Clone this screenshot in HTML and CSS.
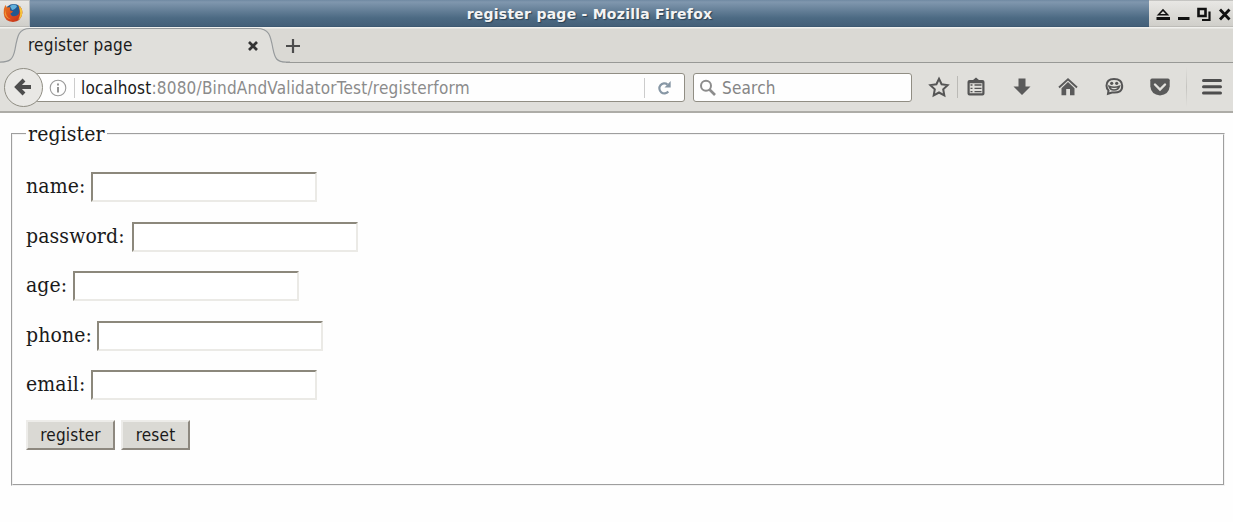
FILE: index.html
```
<!DOCTYPE html>
<html lang="en">
<head>
<meta charset="utf-8">
<title>register page</title>
<link rel="stylesheet" href="styles.css">
</head>
<body>
<header class="titlebar">
  <div class="app-icon">
    <svg width="20" height="20" viewBox="0 0 20 20">
      <defs>
        <linearGradient id="fox" x1="0" y1="0" x2="1" y2="1"><stop offset="0" stop-color="#e87a22"/><stop offset=".55" stop-color="#d9481c"/><stop offset="1" stop-color="#b92d18"/></linearGradient>
      </defs>
      <circle cx="10.7" cy="9.3" r="8.4" fill="#22588f"/>
      <path d="M7 3Q11 0 14 3Q13 6 9 7z" fill="#5fb0dc"/>
      <path d="M15 1.8Q20 5.5 19.3 10.5Q18 18.6 10 19Q1.4 18.6.7 10.5Q.5 5 2.3 2L4 4.6Q6 3.7 7.6 4.6Q6.4 6.3 7.2 7.4L10 8.3Q9.5 9.8 7.4 10.4Q8 13.3 11 13.2Q16.7 13 16.5 7Q16.3 4 15 1.8z" fill="url(#fox)"/>
      <path d="M15 1.8Q20 5.5 19.3 10.5Q18.6 15 15 17Q18 12 16.8 7Q16.4 4 15 1.8z" fill="#f6c33b"/>
      <path d="M2.5 7Q2.3 14 8 16.3Q3.3 15.8 1.6 11z" fill="#f19a37"/>
    </svg>
  </div>
  <div class="window-title">register page - Mozilla Firefox</div>
  <div class="window-controls">
    <svg width="84" height="27" viewBox="0 0 84 27" fill="none" stroke="#111" stroke-width="2">
      <path d="M9.500 14.800L14 10L18.500 14.800z" stroke-width="1.600"/><path d="M7.500 18.500h13.500" stroke-width="3"/><path d="M29 18.500h11.500" stroke-width="3"/>
      <path d="M49.500 9h7v7h-7z" stroke-width="2.600"/><path d="M60.500 11.500v8.500H53" stroke-width="2.200"/>
      <path d="M71 9.500l9.500 10M80.500 9.500l-9.500 10" stroke-width="2.800"/>
    </svg>
  </div>
</header>
<div class="tabstrip">
  <div class="tab">
    <svg class="tab-shape" width="290" height="36" viewBox="0 0 290 36">
      <path d="M0 35.500C10 35.500 13 33 15 23C17.500 8 19 1.500 30 1.500H257C269 1.500 270.500 8 273 22C275 32 277 35.500 286 35.500V36H0z" fill="#e0dfdb"/>
      <path d="M0 35C10 35 13 32.500 15 22.500C17.500 8 19 1.500 30 1.500H257C269 1.500 270.500 8 273 22C275 32 277 35 286 35H290" fill="none" stroke="#969a9c" stroke-width="1.200"/>
    </svg>
    <span class="tab-label">register page</span>
    <svg class="tab-close" width="10" height="10" viewBox="0 0 10 10"><path d="M1 1l8 8M9 1l-8 8" stroke="#333" stroke-width="2.700"/></svg>
  </div>
  <svg class="new-tab" width="16" height="16" viewBox="0 0 16 16"><path d="M8 1v14M1 8h14" stroke="#4c4c4c" stroke-width="2.200"/></svg>
</div>
<nav class="toolbar">
  <div class="back">
    <svg width="18" height="18" viewBox="0 0 18 18"><path d="M10 2L3 9l7 7M3 9h14" fill="none" stroke="#4d4d4d" stroke-width="4"/></svg>
  </div>
  <div class="urlbar">
    <svg class="info" width="18" height="18" viewBox="0 0 18 18"><circle cx="9" cy="9" r="7.800" fill="none" stroke="#999" stroke-width="1.100"/><path d="M9 4.500v2M9 8v5.500" stroke="#888" stroke-width="1.800"/></svg>
    <span class="sep"></span>
    <span class="url"><b>localhost</b>:8080/BindAndValidatorTest/registerform</span>
    <span class="sep"></span>
    <svg class="reload" width="14" height="15" viewBox="0 0 14 15"><path d="M11.300 11.500A5 5 0 1 1 10.500 4.500" fill="none" stroke="#8797a5" stroke-width="2.200"/><path d="M13.700 1v6.500H7.500z" fill="#8797a5"/></svg>
  </div>
  <div class="search">
    <svg width="18" height="18" viewBox="0 0 18 18" fill="none" stroke="#8c8c8c"><circle cx="7" cy="6.700" r="5" stroke-width="2"/><path d="M10.500 10.500l5.500 5.500" stroke-width="2.600"/></svg>
    <span>Search</span>
  </div>
  <div class="tools">
    <svg width="22" height="22" viewBox="0 0 22 22"><path d="M11 2.800l2.600 5.500 6 .8-4.400 4.200 1.100 6.100-5.300-2.900-5.300 2.900 1.100-6.100-4.400-4.200 6-.8z" fill="none" stroke="#555" stroke-width="2"/></svg>
    <span class="tool-sep"></span>
    <svg width="22" height="22" viewBox="0 0 22 22"><path fill="#555" fill-rule="evenodd" d="M4.500 4H8l3-2.500L14 4h3.500q2 0 2 2v11.500q0 2-2 2h-13q-2 0-2-2V6q0-2 2-2zM4.700 7.300v10h12.600v-10z"/><path d="M5.500 9h2M9.500 9h7M5.500 12.300h2M9.500 12.300h7M5.500 15.600h2M9.500 15.600h7" stroke="#555" stroke-width="1.300"/></svg>
    <svg width="22" height="22" viewBox="0 0 22 22"><path d="M7.500 2.500h7v8h5L11 19l-8.500-8.500h5z" fill="#5a5a5a"/></svg>
    <svg width="22" height="22" viewBox="0 0 22 22"><path d="M2 11.500L11 3.200l9 8.300" fill="none" stroke="#5a5a5a" stroke-width="1.900"/><path d="M4.500 12.200L11 6l6.500 6.200v7H13V13H9.200v6.200H4.500z" fill="#5a5a5a"/></svg>
    <svg width="22" height="22" viewBox="0 0 22 22"><path d="M11 3C6 3 3.500 5.800 3.500 9.800q0 2.700 2 4.700L5 17.800 9 16.500q10.500 1 10.200-6.700Q19 3 11 3z" fill="none" stroke="#555" stroke-width="2"/><path d="M6 10.200Q11 12.200 16.500 10.200Q15.500 13.800 11 14Q7 13.800 6 10.200z" fill="none" stroke="#555" stroke-width="1.500"/><circle cx="8.700" cy="7.300" r="1.600" fill="#555"/><circle cx="13.700" cy="7.300" r="1.600" fill="#555"/></svg>
    <svg width="22" height="22" viewBox="0 0 22 22"><path d="M3 2.500h16q1.700 0 1.700 1.700v6Q20 18.500 11 19.500Q2 18.500 1.300 10.200v-6Q1.300 2.500 3 2.500z" fill="#5a5a5a"/><path d="M6 8.500l5 5 5-5" fill="none" stroke="#e2e1dd" stroke-width="2.400" stroke-linecap="round"/></svg>
    <span class="menu-sep"></span>
    <svg width="22" height="22" viewBox="0 0 22 22"><path d="M2.500 4.500h17M2.500 10.700h17M2.500 16.900h17" stroke="#4d4d4d" stroke-width="3" stroke-linecap="round"/></svg>
  </div>
</nav>
<main class="page">
  <form>
    <fieldset>
      <legend>register</legend>
      <div class="row"><label class="l-name" for="name">name:</label><input id="name" type="text"></div>
      <div class="row"><label class="l-password" for="password">password:</label><input id="password" type="password"></div>
      <div class="row"><label class="l-age" for="age">age:</label><input id="age" type="text"></div>
      <div class="row"><label class="l-phone" for="phone">phone:</label><input id="phone" type="text"></div>
      <div class="row"><label class="l-email" for="email">email:</label><input id="email" type="text"></div>
      <div class="row"><button class="b-register" type="button">register</button><button class="b-reset" type="reset">reset</button></div>
    </fieldset>
  </form>
</main>
</body>
</html>
```
FILE: styles.css
```
* { box-sizing: border-box; }
body {
  margin: 0;
  height: 522px;
  overflow: hidden;
  background: #fefefe;
  color: #1a1a1a;
  font-family: "DejaVu Sans Condensed", "DejaVu Sans", sans-serif;
  font-stretch: condensed;
  font-size: 17px;
  letter-spacing: .2px;
}
svg { display: block; flex: none; }

.titlebar {
  display: flex;
  height: 27px;
  background: linear-gradient(#6f89a2 0, #8097ae 2px, #4c6a83 18px, #446079 26px, #38536b 27px);
}
.app-icon, .window-controls {
  background: linear-gradient(#a3a3a1 0, #e8e7e4 1px, #d0cfca 26px, #aaa9a5 27px);
}
.app-icon { width: 30px; padding: 3px 0 0 3px; border-right: 1px solid #b5bbc0; }
.window-title {
  flex: 1;
  padding-top: 1px;
  text-align: center;
  font: bold 14px/27px "DejaVu Sans", sans-serif;
  letter-spacing: .25px;
  color: #f4f4f4;
  text-shadow: 1px 1px 1px #2b4052;
}
.window-controls { width: 84px; }

.tabstrip {
  display: flex;
  height: 36px;
  background: linear-gradient(#f1f1ee 0, #f1f1ee 1px, #dad9d4 2px, #dad9d4 35px, #989996 35px);
}
.tab { position: relative; width: 285px; display: flex; height: 36px; }
.tab-shape { position: absolute; left: 0; top: 0; }
.tab-label { position: relative; margin-left: 28px; width: 220px; line-height: 36px; }
.tab-close { position: relative; margin-top: 14px; }
.new-tab { margin-top: 11px; }

.toolbar {
  display: flex;
  height: 50px;
  background: #e0dfdb;
  border-bottom: 2px solid #adaca7;
}
.back {
  position: relative;
  z-index: 1;
  width: 39px;
  height: 39px;
  margin: 5px 0 0 4px;
  padding: 9px 0 0 9px;
  border: 1px solid #8f8d83;
  border-radius: 50%;
  background: #e9e8e5;
}
.urlbar, .search {
  display: flex;
  align-items: center;
  height: 29px;
  margin-top: 10px;
  border: 1px solid #918e84;
  border-radius: 3px;
  background: #fefefe;
}
.urlbar { width: 650px; margin-left: -8px; padding-left: 13px; }
.sep { width: 1px; height: 20px; background: #ccc; }
.info + .sep { margin: 0 6px 0 7px; }
.url { width: 563px; color: #8b8b8b; }
.url b { color: #1a1a1a; font-weight: normal; }
.reload { margin-left: 12px; }
.search { width: 219px; margin-left: 8px; padding-left: 5px; color: #858585; }
.search span { margin-left: 5px; }
.tools { display: flex; margin: 13px 0 0 16px; }
.tool-sep { width: 1px; height: 22px; margin: 0 7px; background: #bbbab6; }
.tools svg + svg { margin-left: 24px; }
.menu-sep { width: 1px; height: 40px; margin: -9px 14px 0 15px; background: linear-gradient(#e0dfdb, #c5c4c0, #e0dfdb); }

.page {
  padding: 9px 8px 0 11px;
  font-family: "DejaVu Serif Condensed", "DejaVu Serif", serif;
  font-size: 21px;
  letter-spacing: .1px;
}
fieldset { height: 364px; margin: 0; padding: 27px 13px 0; border: 2px groove #f2f2f2; }
legend { height: 23px; padding: 0 2px; line-height: 24px; }
.row { display: flex; height: 49.6px; }
label { line-height: 28px; white-space: nowrap; }
.l-name, .l-email { width: 65px; }
.l-password { width: 106px; }
.l-age { width: 47px; }
.l-phone { width: 71px; }
input {
  width: 226px;
  height: 30px;
  border: 2px solid;
  border-color: #8c887c #ebeae6 #ebeae6 #8c887c;
  background: #fff;
}
button {
  height: 30px;
  padding: 0;
  border: 2px solid;
  border-color: #edece9 #8d887f #8d887f #edece9;
  background: #dad9d4;
  color: #1a1a1a;
  font: condensed 17px "DejaVu Sans Condensed", "DejaVu Sans", sans-serif;
  letter-spacing: .2px;
}
.b-register { width: 89px; margin-right: 6px; }
.b-reset { width: 69px; }
```
